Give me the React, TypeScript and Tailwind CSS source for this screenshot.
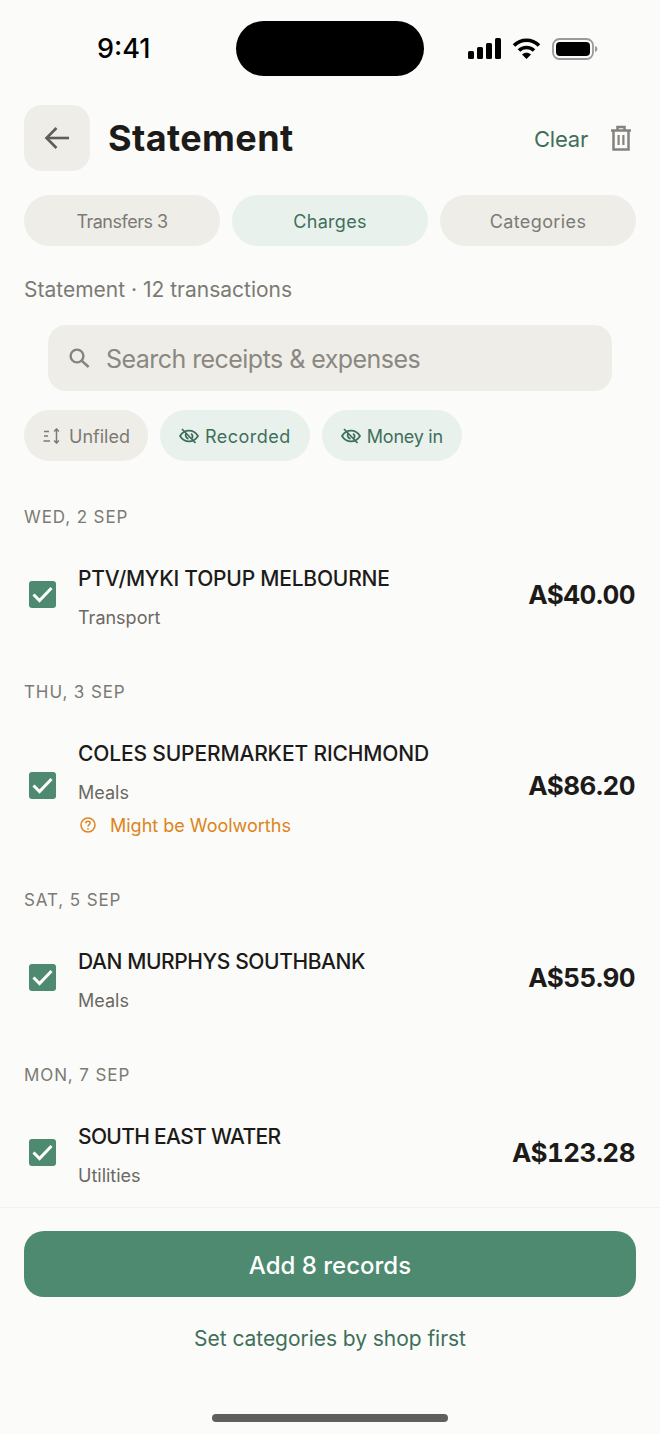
const font = { fontFamily: '"Inter", "Liberation Sans", sans-serif' };

// ─── Small drawn icons ────────────────────────────────────────────────────────

const StatusIcons = () => (
  <div className="flex items-center">
    <svg width="33" height="21" viewBox="0 0 33 21" fill="#000">
      <rect x="0" y="13" width="6" height="8" rx="1.5" />
      <rect x="9" y="9" width="6" height="12" rx="1.5" />
      <rect x="18" y="5" width="6" height="16" rx="1.5" />
      <rect x="27" y="0" width="6" height="21" rx="1.5" />
    </svg>
    <svg width="29" height="21" viewBox="0 0 28 21" fill="none" stroke="#000" strokeWidth="3.6" className="ml-[11px]">
      <path d="M1.5 7.5C8.5 0.5 19.5 0.5 26.5 7.5" />
      <path d="M6.5 12.5C10.5 8.5 17.5 8.5 21.5 12.5" />
      <path d="M14 21L9.5 16.5C12 14.2 16 14.2 18.5 16.5Z" fill="#000" stroke="none" />
    </svg>
    <svg width="46" height="22" viewBox="0 0 46 22" fill="none" className="ml-[11px]">
      <rect x="1" y="1" width="40" height="20" rx="6.5" stroke="#9a9a9a" strokeWidth="1.8" />
      <rect x="4" y="4" width="34" height="14" rx="4" fill="#000" />
      <path d="M43 8V14C44.6 13.4 45.4 12.3 45.4 11C45.4 9.7 44.6 8.6 43 8Z" fill="#9a9a9a" />
    </svg>
  </div>
);

const BackArrow = () => (
  <svg width="26" height="24" viewBox="0 0 26 24" fill="none" stroke="#5f5d57" strokeWidth="2.6">
    <path d="M25 12H3" />
    <path d="M12.5 2L2.5 12L12.5 22" />
  </svg>
);

const SearchIcon = () => (
  <svg width="21" height="20" viewBox="0 0 21 20" fill="none" stroke="#85837d" strokeWidth="2.4">
    <circle cx="8" cy="8" r="6.4" />
    <path d="M12.6 12.6L19.6 19" />
  </svg>
);

const TrashIcon = () => (
  <svg width="24" height="26" viewBox="0 0 24 26" fill="none" stroke="#85837d" strokeWidth="2.5">
    <path d="M2 5.5H22" />
    <path d="M8.5 5V2H15.5V5" />
    <path d="M4.5 5.5V24.5H19.5V5.5" />
    <path d="M9.6 10V20M14.4 10V20" strokeWidth="2.2" />
  </svg>
);

const SortIcon = () => (
  <svg width="18" height="16" viewBox="0 0 18 16" fill="none" stroke="#7c7a74" strokeWidth="1.5">
    <path d="M1 3.5H6M1 8H5M0.5 13H7" />
    <path d="M13.5 1V15" />
    <path d="M11.2 3.6L13.5 1L15.8 3.6M11.2 12.4L13.5 15L15.8 12.4" />
  </svg>
);

const EyeSlashIcon = () => (
  <svg width="20" height="16" viewBox="0 0 20 16" fill="none" stroke="#3f6f5a" strokeWidth="1.8">
    <path d="M1 8C3.2 4.4 6.4 2.6 10 2.6C13.6 2.6 16.8 4.4 19 8C16.8 11.6 13.6 13.4 10 13.4C6.4 13.4 3.2 11.6 1 8Z" />
    <path d="M7 5.4C6 7.4 7 10 9.5 10.8M12.8 10.6C13.8 9 13.6 6.8 12 5.6" />
    <path d="M3 1L16.5 15" />
  </svg>
);

const QuestionIcon = () => (
  <svg width="16" height="16" viewBox="0 0 16 16" fill="none" stroke="#dc8420" strokeWidth="1.5" className="ml-[2px]">
    <circle cx="8" cy="8" r="7" />
    <path d="M5.9 6.2C5.9 5 6.8 4.2 8 4.2C9.2 4.2 10.1 5 10.1 6.1C10.1 7.6 8 7.6 8 9.4" />
    <path d="M8 11V12.4" />
  </svg>
);

const Checkbox = () => (
  <div className="mb-[7px] w-[27px] h-[27px] ml-[5px] mr-[22px] shrink-0 rounded-[3px] bg-[#4d8a70] flex items-center justify-center">
    <svg width="21" height="17" viewBox="0 0 21 17" fill="none" stroke="#fff" strokeWidth="3">
      <path d="M1.5 8.5L7.5 14.5L19.5 2" />
    </svg>
  </div>
);

// ─── Pieces ───────────────────────────────────────────────────────────────────

const Tab = ({ label, active, track }: { label: string; active?: boolean; track: string }) => (
  <div
    className={`flex-1 h-[51px] rounded-full flex items-center justify-center text-[18px] leading-[26px] pt-[2px] ${track} ${
      active ? 'bg-[#e9f1ed] text-[#3f6f5a]' : 'bg-[#eeede8] text-[#7c7a74]'
    }`}
  >
    {label}
  </div>
);

const Chip = ({ label, green, track }: { label: string; green?: boolean; track: string }) => (
  <div
    className={`h-[51px] rounded-full flex items-center text-[18px] pl-[19px] ${
      green ? 'gap-[6px] pr-[19px] bg-[#e9f1ed] text-[#3f6f5a]' : 'gap-[8px] pr-[18px] bg-[#eeede8] text-[#7c7a74]'
    }`}
  >
    {green ? <EyeSlashIcon /> : <SortIcon />}
    <span className={`pt-[2px] ${track}`}>{label}</span>
  </div>
);

type Item = { date: string; title: string; track: string; sub: string; amount: string; warn?: string };

const items: Item[] = [
  { date: 'WED, 2 SEP', title: 'PTV/MYKI TOPUP MELBOURNE', track: 'tracking-[-0.22px]', sub: 'Transport', amount: 'A$40.00' },
  { date: 'THU, 3 SEP', title: 'COLES SUPERMARKET RICHMOND', track: 'tracking-[-0.15px]', sub: 'Meals', amount: 'A$86.20', warn: 'Might be Woolworths' },
  { date: 'SAT, 5 SEP', title: 'DAN MURPHYS SOUTHBANK', track: 'tracking-[-0.4px]', sub: 'Meals', amount: 'A$55.90' },
  { date: 'MON, 7 SEP', title: 'SOUTH EAST WATER', track: 'tracking-[-0.68px]', sub: 'Utilities', amount: 'A$123.28' },
];

const Row = ({ item }: { item: Item }) => (
  <section className="mb-[53px]">
    <div className="h-[20px] leading-[20px] text-[17px] tracking-[0.9px] text-[#7c7a74]">{item.date}</div>
    <div className="mt-[39px] flex items-center">
      <Checkbox />
      <div className="flex-1 min-w-0">
        <div className={`h-[24px] leading-[26px] text-[21px] font-medium text-[#1c1b19] ${item.track}`}>{item.title}</div>
        <div className="mt-[15px] h-[24px] leading-[26px] text-[18px] text-[#6b6964]">{item.sub}</div>
        {item.warn && (
          <div className="mt-[9px] h-[24px] flex items-center gap-[14px] text-[18px] text-[#dc8420]">
            <QuestionIcon />
            {item.warn}
          </div>
        )}
      </div>
      <div className="mb-[7px] mr-[1px] text-[26px] font-bold tracking-[-0.5px] tabular-nums text-[#1c1b19]">{item.amount}</div>
    </div>
  </section>
);

export default function App() {
  return (
    <div style={font} className="w-[660px] h-[1434px] bg-[#fbfbf9] flex flex-col overflow-hidden">
      {/* status bar */}
      <div className="h-[105px] shrink-0 pt-[21px] pl-[97px] flex items-start">
        <div className="w-[139px] h-[55px] leading-[55px] text-[27px] font-medium text-black">9:41</div>
        <div className="w-[188px] h-[55px] rounded-full bg-black" />
        <div className="ml-[44px] h-[55px] flex items-center">
          <StatusIcons />
        </div>
      </div>

      <div className="px-[24px] shrink-0">
        {/* header */}
        <div className="h-[66px] flex items-center">
          <div className="w-[66px] h-[66px] rounded-[18px] bg-[#eeede8] flex items-center justify-center">
            <BackArrow />
          </div>
          <h1 className="ml-[18px] text-[36px] font-bold tracking-[0.4px] text-[#1c1b19]">Statement</h1>
          <div className="ml-auto pt-[2px] text-[22px] tracking-[-0.2px] text-[#3f6f5a]">Clear</div>
          <div className="ml-[21px] mr-[3px]">
            <TrashIcon />
          </div>
        </div>

        {/* tabs */}
        <div className="mt-[24px] flex gap-[12px]">
          <Tab label="Transfers 3" track="tracking-[-0.5px]" />
          <Tab label="Charges" active track="tracking-[0.3px]" />
          <Tab label="Categories" track="tracking-[0.4px]" />
        </div>

        <div className="mt-[31px] h-[24px] leading-[26px] text-[21px] text-[#7c7a74]">Statement · 12 transactions</div>

        {/* search */}
        <div className="mt-[24px] mx-[24px] h-[66px] rounded-[18px] bg-[#eeede8] flex items-center pl-[21px]">
          <SearchIcon />
          <span className="ml-[16px] pt-[3px] text-[25px] tracking-[-0.55px] text-[#8a8881]">Search receipts &amp; expenses</span>
        </div>

        {/* filter chips */}
        <div className="mt-[19px] flex gap-[12px]">
          <Chip label="Unfiled" track="tracking-[0px]" />
          <Chip label="Recorded" green track="tracking-[0.5px]" />
          <Chip label="Money in" green track="tracking-[-0.25px]" />
        </div>
      </div>

      {/* list */}
      <div className="flex-1 min-h-0 overflow-hidden px-[24px] pt-[46px]">
        {items.map((item) => (
          <Row key={item.date} item={item} />
        ))}
      </div>

      {/* footer */}
      <div className="shrink-0 h-[227px] border-t border-[#f2f2ef] px-[24px] pt-[23px] flex flex-col items-center">
        <div className="w-full h-[66px] rounded-[20px] bg-[#4d8a70] flex items-center justify-center pt-[3px] text-[24px] font-medium text-white">
          Add 8 records
        </div>
        <div className="mt-[28px] h-[28px] leading-[28px] text-[21px] tracking-[-0.05px] text-[#3f6f5a]">Set categories by shop first</div>
        <div className="mt-[61px] w-[236px] h-[8px] rounded-full bg-[#5f5f5f]" />
      </div>
    </div>
  );
}
